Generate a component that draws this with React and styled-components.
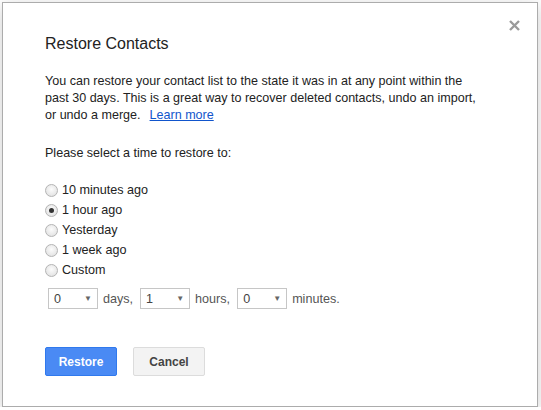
import { createGlobalStyle, styled } from 'styled-components'

const GlobalStyle = createGlobalStyle`
  html, body {
    margin: 0;
    padding: 0;
    background: #fff;
  }
  body {
    font-family: Arial, "Liberation Sans", sans-serif;
    color: #222;
  }
`

const Dialog = styled.div`
  position: relative;
  box-sizing: border-box;
  width: 536px;
  height: 405px;
  margin: 2px 0 0 2px;
  padding: 31px 42px 0 42px;
  background: #fff;
  border: 1px solid #acacac;
  box-shadow: 0 4px 16px rgba(0, 0, 0, 0.2);
`

const Close = styled.button`
  position: absolute;
  top: 15px;
  right: 16px;
  width: 14px;
  height: 14px;
  padding: 0;
  border: 0;
  background: none;
  display: flex;
  align-items: center;
  justify-content: center;
  cursor: pointer;
`

const Title = styled.h2`
  margin: 0;
  font-size: 16px;
  font-weight: normal;
  line-height: 20px;
  color: #222;
`

const Text = styled.p`
  margin: ${(p) => p.$top || 0}px 0 0;
  width: ${(p) => p.$width || 'auto'};
  font-size: 12.55px;
  line-height: 17px;
`

const Link = styled.a`
  margin-left: 9px;
  color: #15c;
  text-decoration: underline;
`

const Options = styled.div`
  margin-top: 18px;
  display: flex;
  flex-direction: column;
`

const Option = styled.label`
  display: flex;
  align-items: center;
  height: 20px;
  font-size: 12.6px;
  gap: 4px;
`

const Radio = styled.span`
  box-sizing: border-box;
  width: 13px;
  height: 13px;
  border-radius: 50%;
  border: 1px solid #b4b4b4;
  background: radial-gradient(circle at 50% 40%, #fcfcfc 0%, #e6e6e6 70%, #d8d8d8 100%);
  display: flex;
  align-items: center;
  justify-content: center;
  &::after {
    content: '';
    width: 5px;
    height: 5px;
    border-radius: 50%;
    background: #333;
    display: ${(p) => (p.$checked ? 'block' : 'none')};
  }
`

const Custom = styled.div`
  margin: 8px 0 0 3px;
  display: flex;
  align-items: center;
  gap: 5px;
  font-size: 12.6px;
  color: #555;
`

const Select = styled.div`
  box-sizing: border-box;
  width: 50px;
  height: 21px;
  padding: 0 5px;
  border: 1px solid #c6c6c6;
  background: #fff;
  color: #444;
  display: flex;
  align-items: center;
  justify-content: space-between;
  margin-left: ${(p) => p.$gap || 0}px;
`

const Arrow = styled.span`
  font-size: 8px;
  color: #666;
`

const Buttons = styled.div`
  margin-top: 38px;
  display: flex;
  gap: 16px;
`

const Button = styled.button`
  box-sizing: border-box;
  min-width: 72px;
  height: 29px;
  padding: 0 8px;
  border-radius: 2px;
  font-family: Arial, "Liberation Sans", sans-serif;
  font-size: 12px;
  font-weight: bold;
  border: 1px solid ${(p) => (p.$primary ? '#3079ed' : '#dcdcdc')};
  background: ${(p) => (p.$primary ? '#4a8af4' : '#f3f3f3')};
  color: ${(p) => (p.$primary ? '#fff' : '#444')};
`

const options = ['10 minutes ago', '1 hour ago', 'Yesterday', '1 week ago', 'Custom']

export default function App() {
  return (
    <>
      <GlobalStyle />
      <Dialog>
        <Close aria-label="Close">
          <svg width="11" height="11" viewBox="0 0 11 11">
            <path d="M1 1L10 10M10 1L1 10" stroke="#9a9a9a" strokeWidth="2.4" />
          </svg>
        </Close>
        <Title>Restore Contacts</Title>
        <Text $top={19} $width="436px">
          You can restore your contact list to the state it was in at any point within the past 30
          days. This is a great way to recover deleted contacts, undo an import, or undo a merge.
          <Link href="#">Learn more</Link>
        </Text>
        <Text $top={21}>Please select a time to restore to:</Text>
        <Options>
          {options.map((o, i) => (
            <Option key={o}>
              <Radio $checked={i === 1} />
              {o}
            </Option>
          ))}
        </Options>
        <Custom>
          <Select>
            0<Arrow>▼</Arrow>
          </Select>
          days,
          <Select $gap={2}>
            1<Arrow>▼</Arrow>
          </Select>
          hours,
          <Select $gap={2}>
            0<Arrow>▼</Arrow>
          </Select>
          minutes.
        </Custom>
        <Buttons>
          <Button $primary>Restore</Button>
          <Button>Cancel</Button>
        </Buttons>
      </Dialog>
    </>
  )
}
